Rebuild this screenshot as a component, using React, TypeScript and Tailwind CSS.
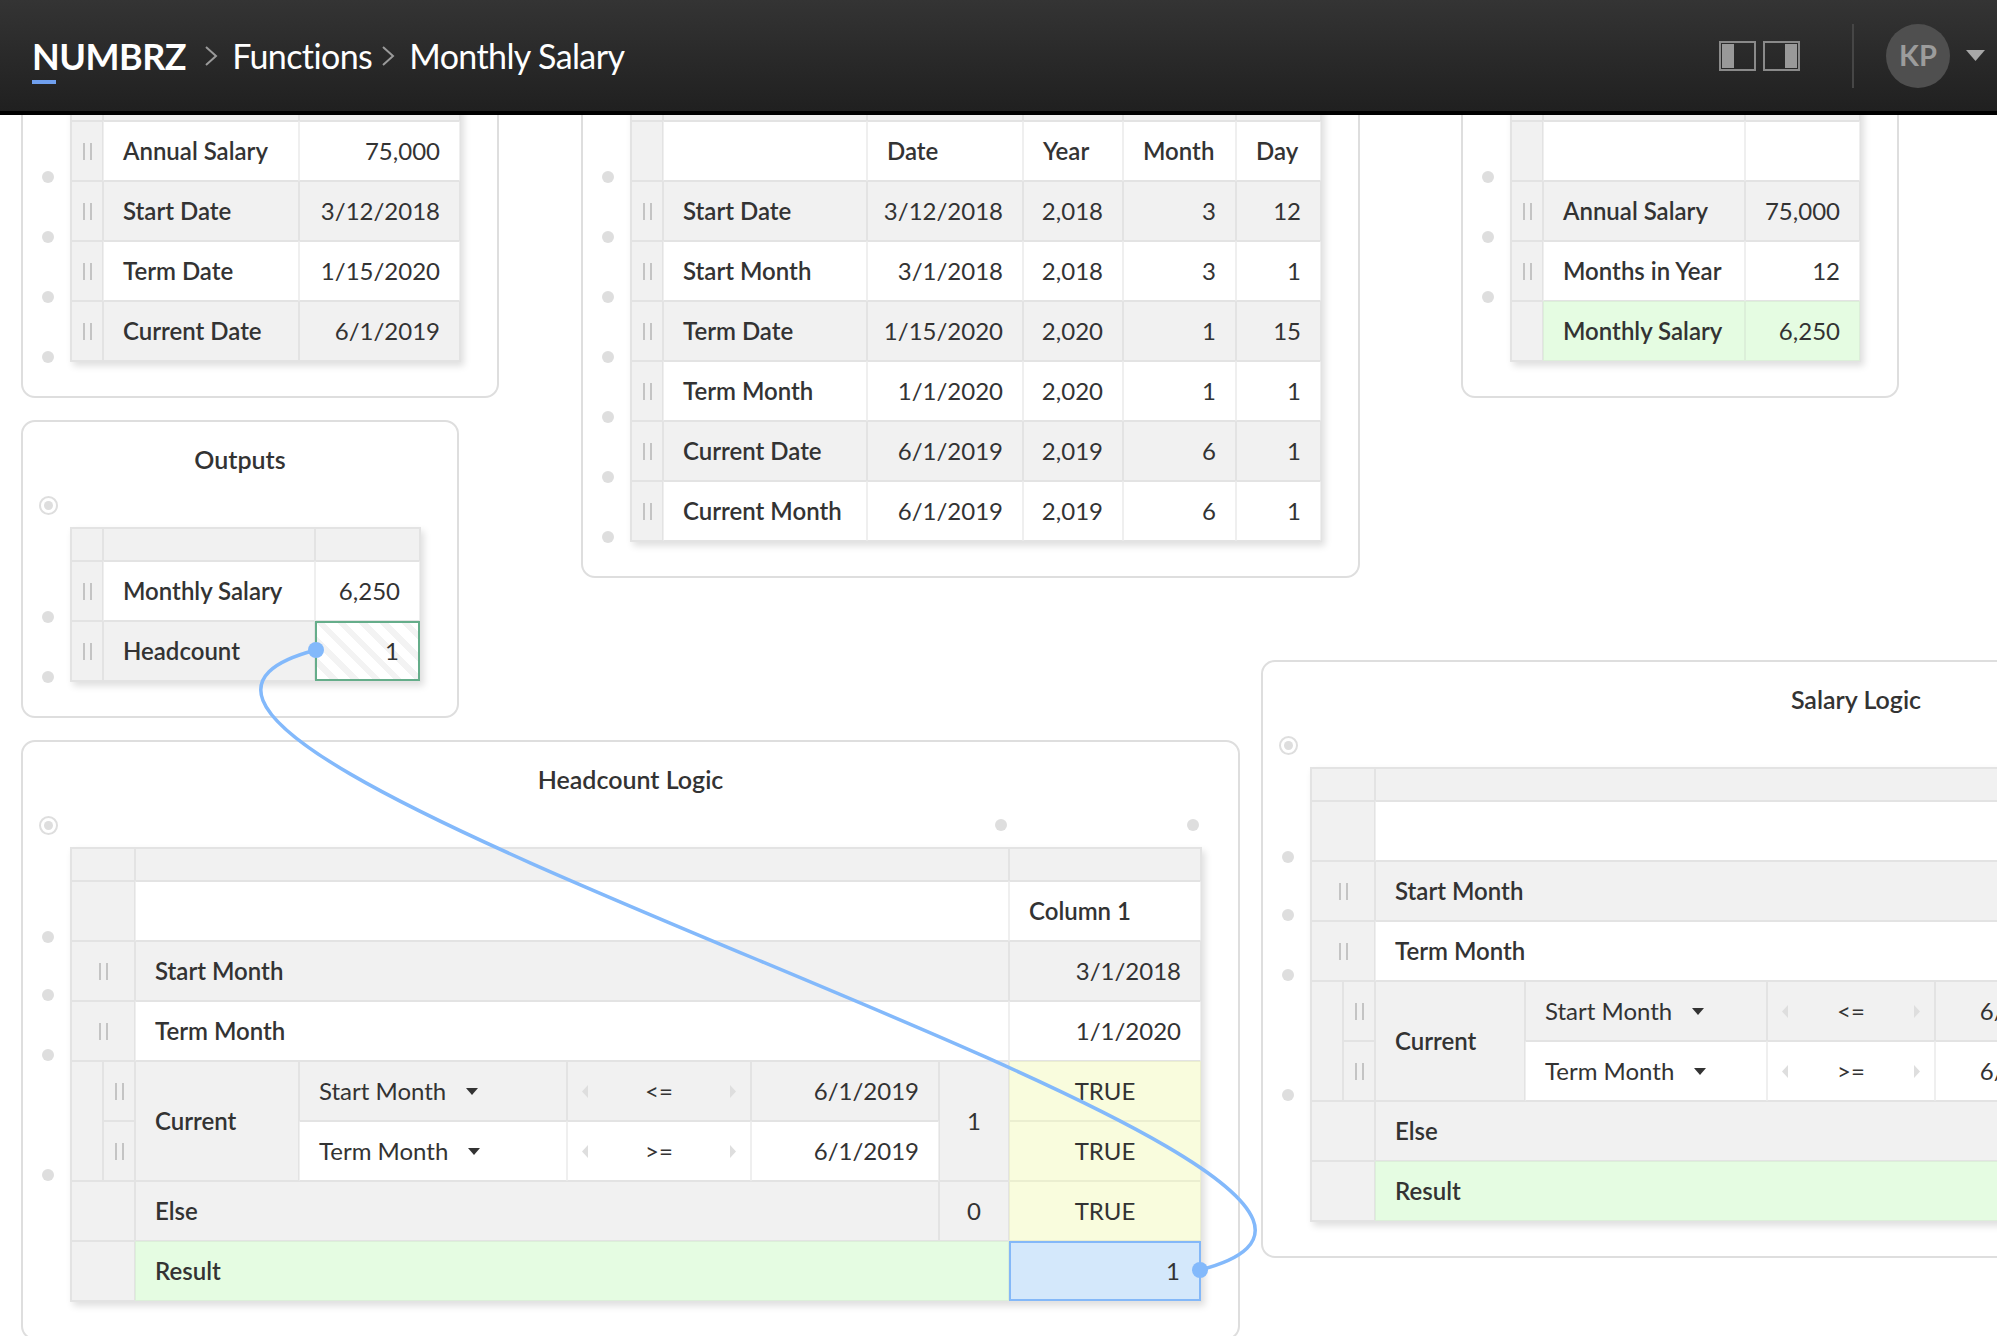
import React from "react";

const base = "flex items-center min-w-0 whitespace-nowrap border text-[24px] leading-none text-[#333]";
const grey = "bg-[#f1f1f1] border-[#e3e3e3]";
const white = "bg-white border-y-[#e3e3e3] border-x-[#efefef]";
const green = "bg-[#e5fce2] border-[#dcefd9]";
const yellow = "bg-[#f9fcdd] border-[#ebeed0]";

function Grip() {
  return (
    <div className="flex w-full justify-center gap-[5px]">
      <span className="h-[17px] w-[2px] bg-[#c4c4c4]" />
      <span className="h-[17px] w-[2px] bg-[#c4c4c4]" />
    </div>
  );
}

function Cell({ tone = grey, className = "", children }: { tone?: string; className?: string; children?: React.ReactNode }) {
  return <div className={`${base} ${tone} ${className}`}>{children}</div>;
}

const L = ({ tone = grey, className = "", children }: { tone?: string; className?: string; children?: React.ReactNode }) => (
  <Cell tone={tone} className={`pl-[19px] font-semibold ${className}`}>{children}</Cell>
);
const V = ({ tone = grey, className = "", children }: { tone?: string; className?: string; children?: React.ReactNode }) => (
  <Cell tone={tone} className={`justify-end pr-[19px] ${className}`}>{children}</Cell>
);
const G = ({ on = true, className = "" }: { on?: boolean; className?: string }) => (
  <Cell className={className}>{on ? <Grip /> : null}</Cell>
);

function Dot({ className = "" }: { className?: string }) {
  return <span className={`block h-[12px] w-[12px] shrink-0 rounded-full bg-[#dedede] ${className}`} />;
}

function Panel({
  title,
  dots,
  className,
  children,
}: {
  title?: string;
  dots: string[];
  className: string;
  children: React.ReactNode;
}) {
  return (
    <div className={`absolute rounded-[14px] border-2 border-[#dedede] bg-white ${className}`}>
      <div className="flex h-[72px] items-center justify-center pt-[4px] text-[25px] font-semibold text-[#333]">{title}</div>
      <div className="flex">
        <div className="flex w-[47px] shrink-0 flex-col items-center pl-[3px] pt-[2px]">
          <span className="flex h-[19px] w-[19px] items-center justify-center rounded-full border-2 border-[#dedede]">
            <span className="h-[9px] w-[9px] rounded-full bg-[#dedede]" />
          </span>
          {dots.map((d, i) => (
            <Dot key={i} className={d} />
          ))}
        </div>
        <div className="flex flex-col">{children}</div>
      </div>
    </div>
  );
}

const tableBox = "grid self-start border border-[#e3e3e3] bg-white shadow-[3px_4px_7px_rgba(0,0,0,0.13)]";

function Inputs() {
  const rows: [string, string, boolean][] = [
    ["Annual Salary", "75,000", false],
    ["Start Date", "3/12/2018", true],
    ["Term Date", "1/15/2020", false],
    ["Current Date", "6/1/2019", true],
  ];
  return (
    <div className={`${tableBox} mt-[33px] grid-cols-[32px_196px_161px] grid-rows-[33px_repeat(4,60px)]`}>
      <G on={false} />
      <Cell />
      <Cell />
      {rows.map(([a, b, g]) => (
        <React.Fragment key={a}>
          <G />
          <L tone={g ? grey : white}>{a}</L>
          <V tone={g ? grey : white}>{b}</V>
        </React.Fragment>
      ))}
    </div>
  );
}

function DateTable() {
  const rows = [
    ["Start Date", "3/12/2018", "2,018", "3", "12"],
    ["Start Month", "3/1/2018", "2,018", "3", "1"],
    ["Term Date", "1/15/2020", "2,020", "1", "15"],
    ["Term Month", "1/1/2020", "2,020", "1", "1"],
    ["Current Date", "6/1/2019", "2,019", "6", "1"],
    ["Current Month", "6/1/2019", "2,019", "6", "1"],
  ];
  return (
    <div className={`${tableBox} mt-[33px] grid-cols-[32px_204px_156px_100px_113px_85px] grid-rows-[33px_repeat(7,60px)]`}>
      <G on={false} />
      <Cell />
      <Cell />
      <Cell />
      <Cell />
      <Cell />
      <G on={false} />
      <Cell tone={white} />
      {["Date", "Year", "Month", "Day"].map((h) => (
        <L key={h} tone={white}>{h}</L>
      ))}
      {rows.map((r, i) => {
        const t = i % 2 === 0 ? grey : white;
        return (
          <React.Fragment key={r[0]}>
            <G />
            <L tone={t}>{r[0]}</L>
            <V tone={t}>{r[1]}</V>
            <V tone={t}>{r[2]}</V>
            <V tone={t}>{r[3]}</V>
            <V tone={t}>{r[4]}</V>
          </React.Fragment>
        );
      })}
    </div>
  );
}

function ResultTable() {
  return (
    <div className={`${tableBox} mt-[33px] grid-cols-[32px_202px_115px] grid-rows-[33px_repeat(4,60px)]`}>
      <G on={false} />
      <Cell />
      <Cell />
      <G on={false} />
      <Cell tone={white} />
      <Cell tone={white} />
      <G />
      <L>Annual Salary</L>
      <V>75,000</V>
      <G />
      <L tone={white}>Months in Year</L>
      <V tone={white}>12</V>
      <G on={false} />
      <L tone={green}>Monthly Salary</L>
      <V tone={green}>6,250</V>
    </div>
  );
}

function OutputsTable() {
  return (
    <div className={`${tableBox} mt-[33px] grid-cols-[32px_212px_105px] grid-rows-[33px_60px_60px]`}>
      <G on={false} />
      <Cell />
      <Cell />
      <G />
      <L tone={white}>Monthly Salary</L>
      <V tone={white}>6,250</V>
      <G />
      <L>Headcount</L>
      <V
        tone="border-[#65ad8a]"
        className="border-2 bg-[repeating-linear-gradient(45deg,#ffffff,#ffffff_9px,#f3f3f3_9px,#f3f3f3_15px)]"
      >
        1
      </V>
    </div>
  );
}

function Sel({ tone, children }: { tone: string; children: string }) {
  return (
    <Cell tone={tone} className="pl-[19px]">
      {children}
      <svg className="ml-[20px]" width="12" height="7" viewBox="0 0 12 7">
        <path d="M0 0H12L6 7Z" fill="#333" />
      </svg>
    </Cell>
  );
}

function Op({ tone, children }: { tone: string; children: string }) {
  return (
    <Cell tone={tone} className="justify-between px-[14px] text-[22px]">
      <svg width="6" height="13" viewBox="0 0 6 13">
        <path d="M6 0V13L0 6.5Z" fill="#dedede" />
      </svg>
      <span>{children}</span>
      <svg width="6" height="13" viewBox="0 0 6 13">
        <path d="M0 0V13L6 6.5Z" fill="#dedede" />
      </svg>
    </Cell>
  );
}

function LogicTable({ cols, column }: { cols: string; column?: boolean }) {
  const a = "col-span-2";
  const mid = "col-start-3 col-span-5";
  const last = "col-start-8";
  return (
    <div className={`${tableBox} grid-rows-[33px_60px_60px_60px_60px_60px_60px_60px] ${cols}`}>
      <G on={false} className={a} />
      <Cell className={mid} />
      <Cell className={last} />

      <G on={false} className={a} />
      <Cell tone={white} className={mid} />
      {column ? <L tone={white} className={last}>Column 1</L> : <Cell tone={white} className={last} />}

      <G className={a} />
      <L className={mid}>Start Month</L>
      <V className={last}>3/1/2018</V>

      <G className={a} />
      <L tone={white} className={mid}>Term Month</L>
      <V tone={white} className={last}>1/1/2020</V>

      <Cell className="row-span-2" />
      <G />
      <L className="row-span-2">Current</L>
      <Sel tone={grey}>Start Month</Sel>
      <Op tone={grey}>{"<="}</Op>
      <V>6/1/2019</V>
      <Cell className="row-span-2 justify-center">1</Cell>
      <Cell tone={yellow} className="justify-center">TRUE</Cell>

      <G className="col-start-2" />
      <Sel tone={white}>Term Month</Sel>
      <Op tone={white}>{">="}</Op>
      <V tone={white}>6/1/2019</V>
      <Cell tone={yellow} className="col-start-8 justify-center">TRUE</Cell>

      <G on={false} className={a} />
      <L className="col-start-3 col-span-4">Else</L>
      <Cell className="justify-center">0</Cell>
      <Cell tone={yellow} className="justify-center">TRUE</Cell>

      <G on={false} className={a} />
      <L tone={green} className={mid}>Result</L>
      {column ? (
        <V tone="border-[#84b8f8]" className="border-2 bg-[#d4e8fb]">1</V>
      ) : (
        <V tone={green} />
      )}
    </div>
  );
}

const rowDots = ["mt-[96px]", "mt-[48px]", "mt-[48px]", "mt-[48px]", "mt-[48px]", "mt-[48px]", "mt-[48px]"];
const logicDots = ["mt-[96px]", "mt-[46px]", "mt-[48px]", "mt-[108px]"];

export default function App() {
  return (
    <div className="relative h-[1336px] w-[1997px] overflow-hidden bg-white font-['Lato','Open_Sans',sans-serif]">
      <header className="relative z-20 flex h-[115px] items-center border-b-4 border-black bg-linear-to-b from-[#343434] to-[#202020] pl-[32px] text-white">
        <div className="relative text-[36px] font-bold leading-none tracking-[-0.5px]">
          NUMBRZ
          <span className="absolute left-0 top-[42px] h-[4px] w-[24px] bg-[#6f9fee]" />
        </div>
        <svg className="ml-[18px]" width="14" height="20" viewBox="0 0 14 20" fill="none">
          <path d="M2 1L12 10L2 19" stroke="#9a9a9a" strokeWidth="2" />
        </svg>
        <span className="ml-[14px] text-[34px] leading-none tracking-[-0.6px]">Functions</span>
        <svg className="ml-[9px]" width="14" height="20" viewBox="0 0 14 20" fill="none">
          <path d="M2 1L12 10L2 19" stroke="#9a9a9a" strokeWidth="2" />
        </svg>
        <span className="ml-[14px] text-[34px] leading-none tracking-[-0.6px]">Monthly Salary</span>
        <div className="ml-auto flex items-center pr-[12px]">
          <div className="flex h-[30px] w-[37px] border-2 border-[#8a8a8a] pl-[1px] py-[1px]">
            <span className="w-[12px] bg-[#999]" />
          </div>
          <div className="ml-[7px] flex h-[30px] w-[37px] justify-end border-2 border-[#8a8a8a] pr-[1px] py-[1px]">
            <span className="w-[12px] bg-[#999]" />
          </div>
          <span className="ml-[52px] h-[64px] w-[2px] bg-[#464646]" />
          <div className="ml-[32px] flex h-[64px] w-[64px] items-center justify-center rounded-full bg-[#4f4f4f] pb-[2px] text-[29px] font-bold text-[#9c9c9c]">
            KP
          </div>
          <svg className="ml-[16px]" width="19" height="11" viewBox="0 0 19 11">
            <path d="M0 0H19L9.5 11Z" fill="#a8a8a8" />
          </svg>
        </div>
      </header>

      <main className="relative h-[1221px] overflow-hidden">
        <Panel className="left-[21px] top-[-135px] h-[418px] w-[478px]" dots={rowDots.slice(0, 4)}>
          <Inputs />
        </Panel>
        <Panel className="left-[581px] top-[-135px] h-[598px] w-[779px]" dots={rowDots}>
          <DateTable />
        </Panel>
        <Panel className="left-[1461px] top-[-135px] h-[418px] w-[438px]" dots={rowDots.slice(0, 3)}>
          <ResultTable />
        </Panel>
        <Panel title="Outputs" className="left-[21px] top-[305px] h-[298px] w-[438px]" dots={rowDots.slice(0, 2)}>
          <OutputsTable />
        </Panel>
        <Panel title="Headcount Logic" className="left-[21px] top-[625px] h-[600px] w-[1219px]" dots={logicDots}>
          <div className="flex h-[33px] items-start justify-end gap-[180px] pr-[3px] pt-[5px]">
            <Dot />
            <Dot />
          </div>
          <LogicTable column cols="grid-cols-[32px_32px_164px_268px_184px_188px_70px_192px]" />
        </Panel>
        <Panel title="Salary Logic" className="left-[1261px] top-[545px] h-[598px] w-[1190px]" dots={logicDots}>
          <div className="h-[33px]" />
          <LogicTable cols="grid-cols-[32px_32px_150px_242px_168px_170px_70px_192px]" />
        </Panel>
      </main>

      <svg className="pointer-events-none absolute left-0 top-0 z-10" width="1997" height="1336" viewBox="0 0 1997 1336" fill="none">
        <path d="M316 650C-54 746 1570 1174 1200 1270" stroke="#83b9fb" strokeWidth="3.5" />
        <circle cx="316" cy="650" r="8" fill="#83b9fb" />
        <circle cx="1200" cy="1270" r="8" fill="#83b9fb" />
      </svg>
    </div>
  );
}
